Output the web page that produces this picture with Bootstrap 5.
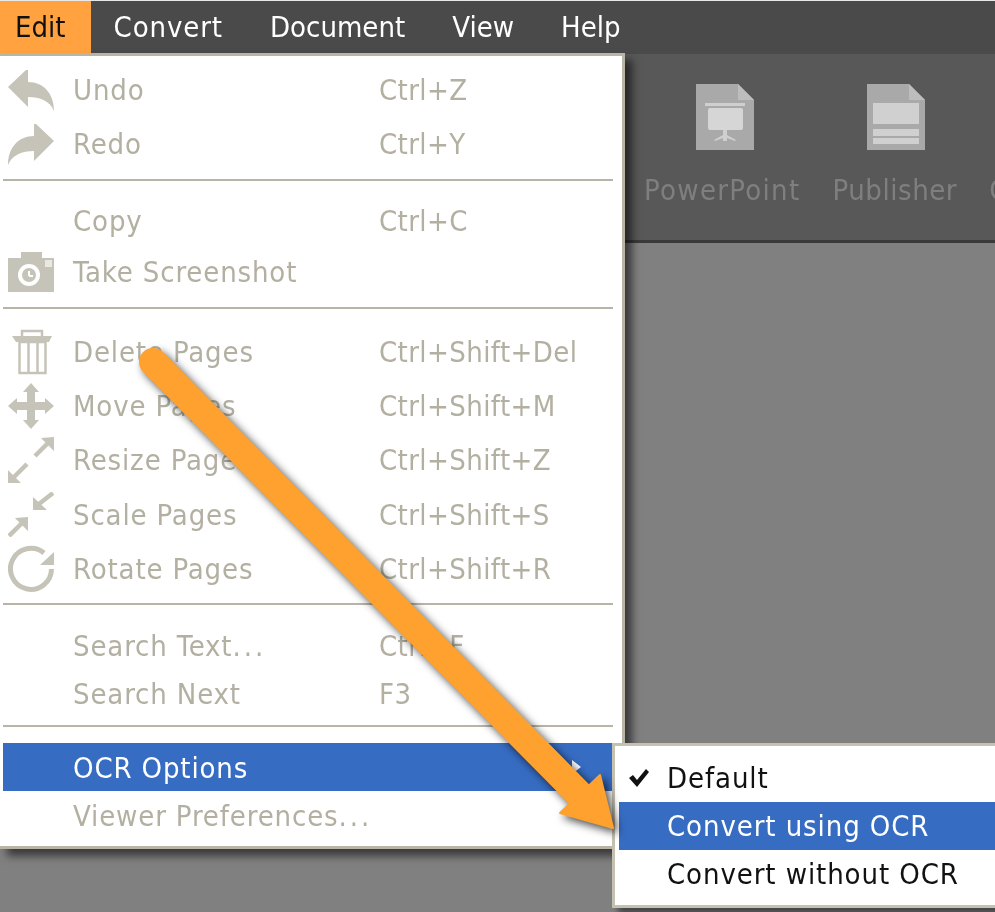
<!DOCTYPE html>
<html lang="en">
<head>
<meta charset="utf-8">
<title>Edit menu</title>
<link rel="stylesheet" href="https://cdn.jsdelivr.net/npm/bootstrap@5.3.0/dist/css/bootstrap.min.css">
<style>
html,body{margin:0;background:#808080}
body{font-family:"DejaVu Sans Condensed","DejaVu Sans","Noto Sans",sans-serif;font-stretch:condensed;font-size:29px;line-height:1}
.app-shell{width:995px;height:912px;overflow:hidden;position:relative;background:#808080;filter:blur(.35px)}
.app-bar{height:54px;background:#4a4a4a;padding:0;flex-wrap:nowrap;justify-content:flex-start;border-top:1px solid #e8e8e8}
.app-top{color:#fff;height:53px;display:flex;align-items:center;padding:0 23.5px;font-size:29px}
.app-top.active-top{background:#ffa23f;color:#111;padding:0 25px 0 15px}
.app-top.wide-word{padding-left:23px;letter-spacing:.9px}
.tool-strip{height:189px;background:#585858;border-bottom:3px solid #3a3a3a;padding:30px 0 0 644px;gap:32px;overflow:hidden}
.tool-item{color:#7f7f7f;flex:0 0 auto}
.tool-item svg{display:block;margin-bottom:26px}
.tool-item svg.pp-icon{margin-left:5px}
.tool-item svg.pub-icon{margin-left:2px}
.tool-item .pp-name{letter-spacing:1.3px}
.tool-item .pub-name{letter-spacing:.55px}
.edit-menu{position:absolute;display:block;top:53px;left:0;width:625px;background:#fff;border:3px solid #b8b5a7;border-left:0;border-radius:0;padding:7px 9px 7px 3px;margin:0;box-shadow:7px 7px 8px rgba(0,0,0,.55);min-width:0;font-size:29px}
.menu-row{display:flex;align-items:center;height:54px;padding:0;color:#b3b0a2;background:transparent;white-space:nowrap}
.menu-row.short-row{height:48px}
.menu-row.disabled{color:#b3b0a2}
.menu-row.nudged .label-slot,.menu-row.nudged .key-slot{padding-top:3px}
.icon-slot{width:70px;padding-left:5px;flex:0 0 auto;display:flex;align-items:center}
.label-slot{width:306px;flex:0 0 auto;letter-spacing:.85px}
.dot-run{letter-spacing:3px}
.key-slot{letter-spacing:.4px}
.menu-rule{height:2px;margin:8px 0 16px;background:#b8b5a7;border:0;opacity:1}
.menu-row.current-row{background:#366cc2;color:#fff;margin-right:-9px;position:relative}
.sub-caret{position:absolute;right:41px;top:17px;width:0;height:0;border-left:9px solid #fff;border-top:7px solid transparent;border-bottom:7px solid transparent}
.ocr-menu{position:absolute;display:block;top:743px;left:612px;width:420px;background:#fff;border:3px solid #c4c1b3;border-radius:0;padding:8px 0 7px 4px;margin:0;box-shadow:6px 6px 6px rgba(0,0,0,.45);min-width:0;font-size:29px}
.ocr-menu .menu-row{color:#111;height:48px;letter-spacing:.9px}
.ocr-menu .menu-row.current-row{color:#fff;margin-right:0}
.check-slot{width:48px;flex:0 0 auto;padding-left:9px;display:flex;align-items:center}
.guide-arrow{position:absolute;left:130px;top:340px;z-index:1100;filter:drop-shadow(4px 4px 4px rgba(0,0,0,.7))}
</style>
</head>
<body>
<div class="app-shell d-flex flex-column">
  <nav class="navbar app-bar">
    <span class="app-top active-top">Edit</span>
    <span class="app-top wide-word">Convert</span>
    <span class="app-top">Document</span>
    <span class="app-top">View</span>
    <span class="app-top">Help</span>
  </nav>
  <div class="tool-strip d-flex">
    <div class="tool-item d-flex flex-column align-items-center">
      <svg class="pp-icon" width="58" height="66" viewBox="0 0 58 66"><path d="M0 0H42L58 16V66H0Z" fill="#a9a9a9"/><path d="M42 0L58 16H42Z" fill="#bdbdbd"/><rect x="9" y="19" width="40" height="3" fill="#cfcfcf"/><rect x="12" y="24" width="35" height="22" rx="2" fill="#d6d6d6"/><path d="M27 46h4v5l9 5-1 1-8-3v3h-4v-3l-8 3-1-1 9-5z" fill="#cfcfcf"/></svg>
      <span class="pp-name">PowerPoint</span>
    </div>
    <div class="tool-item d-flex flex-column align-items-center">
      <svg class="pub-icon" width="58" height="66" viewBox="0 0 58 66"><path d="M0 0H42L58 16V66H0Z" fill="#a9a9a9"/><path d="M42 0L58 16H42Z" fill="#bdbdbd"/><rect x="6" y="19" width="46" height="21" fill="#d0d0d0"/><rect x="6" y="45" width="46" height="7" fill="#d0d0d0"/><rect x="6" y="54" width="46" height="6" fill="#d0d0d0"/></svg>
      <span class="pub-name">Publisher</span>
    </div>
    <div class="tool-item d-flex flex-column align-items-start">
      <svg width="5" height="66" viewBox="0 0 5 66"></svg>
      <span>C</span>
    </div>
  </div>
  <div class="flex-grow-1"></div>

  <div class="dropdown-menu edit-menu">
    <div class="menu-row disabled"><span class="icon-slot"><svg width="46" height="41" viewBox="0 0 46 41"><path d="M18 0L0 17L20 37V27C32 27 42 31 46 41C46 24 36 12 20 12V0Z" fill="#c6c4b8"/></svg></span><span class="label-slot">Undo</span><span class="key-slot">Ctrl+Z</span></div>
    <div class="menu-row disabled"><span class="icon-slot"><svg width="46" height="41" viewBox="0 0 46 41"><path d="M28 0L46 17L26 37V27C14 27 4 31 0 41C0 24 10 12 26 12V0Z" fill="#c6c4b8"/></svg></span><span class="label-slot">Redo</span><span class="key-slot">Ctrl+Y</span></div>
    <hr class="menu-rule">
    <div class="menu-row short-row disabled"><span class="icon-slot"></span><span class="label-slot">Copy</span><span class="key-slot">Ctrl+C</span></div>
    <div class="menu-row disabled"><span class="icon-slot"><svg width="46" height="40" viewBox="0 0 46 40"><path d="M0 6H13V0H34V6H46V40H0Z" fill="#c6c4b8"/><circle cx="21" cy="23" r="11" fill="#fff"/><circle cx="21" cy="23" r="7" fill="#c6c4b8"/><path d="M21 24V19M21 24H25" stroke="#fff" stroke-width="2"/><rect x="37" y="8" width="7" height="7" fill="#e9e8e2"/></svg></span><span class="label-slot">Take Screenshot</span></div>
    <hr class="menu-rule">
    <div class="menu-row disabled"><span class="icon-slot"><svg width="46" height="46" viewBox="0 0 46 46"><g fill="none" stroke="#c6c4b8" stroke-width="2.5"><rect x="14" y="2" width="20" height="7"/><rect x="11.5" y="13" width="26" height="31"/><path d="M20.5 13V44M29.5 13V44"/></g><path d="M4 7H44L41 13H8Z" fill="#c6c4b8"/></svg></span><span class="label-slot">Delete Pages</span><span class="key-slot">Ctrl+Shift+Del</span></div>
    <div class="menu-row disabled"><span class="icon-slot"><svg width="46" height="46" viewBox="0 0 46 46"><path d="M23 0L31 9H27V19H37V15L46 23L37 31V27H27V37H31L23 46L15 37H19V27H9V31L0 23L9 15V19H19V9H15Z" fill="#c6c4b8"/></svg></span><span class="label-slot">Move Pages</span><span class="key-slot">Ctrl+Shift+M</span></div>
    <div class="menu-row disabled"><span class="icon-slot"><svg width="46" height="46" viewBox="0 0 46 46"><path d="M33 1L46 0V14ZM0 46V33L13 46Z" fill="#c6c4b8"/><path d="M27 19L40 6M19 27L6 40" stroke="#c6c4b8" stroke-width="4.5"/></svg></span><span class="label-slot">Resize Pages</span><span class="key-slot">Ctrl+Shift+Z</span></div>
    <div class="menu-row nudged disabled"><span class="icon-slot"><svg width="46" height="45" viewBox="0 0 46 45"><path d="M25 18V5L39 18ZM20 25L7 26L20 39Z" fill="#c6c4b8"/><path d="M45 1L31 12M1 44L14 31" stroke="#c6c4b8" stroke-width="4.5"/></svg></span><span class="label-slot">Scale Pages</span><span class="key-slot">Ctrl+Shift+S</span></div>
    <div class="menu-row nudged disabled"><span class="icon-slot"><svg width="46" height="47" viewBox="0 0 46 47"><path d="M36 8A20.5 20.5 0 1 0 43.5 24" fill="none" stroke="#c6c4b8" stroke-width="5"/><path d="M46 7V20H32Z" fill="#c6c4b8"/></svg></span><span class="label-slot">Rotate Pages</span><span class="key-slot">Ctrl+Shift+R</span></div>
    <hr class="menu-rule">
    <div class="menu-row nudged short-row disabled"><span class="icon-slot"></span><span class="label-slot">Search Text<span class="dot-run">...</span></span><span class="key-slot">Ctrl+F</span></div>
    <div class="menu-row nudged short-row disabled"><span class="icon-slot"></span><span class="label-slot">Search Next</span><span class="key-slot">F3</span></div>
    <hr class="menu-rule">
    <div class="menu-row nudged short-row current-row"><span class="icon-slot"></span><span class="label-slot">OCR Options</span><span class="sub-caret"></span></div>
    <div class="menu-row nudged short-row disabled"><span class="icon-slot"></span><span class="label-slot">Viewer Preferences<span class="dot-run">...</span></span></div>
  </div>

  <div class="dropdown-menu ocr-menu">
    <div class="menu-row"><span class="check-slot"><svg width="22" height="20" viewBox="0 0 22 20"><path d="M1 10L5 7L9 12L18 1L21 4L9 19Z" fill="#111"/></svg></span><span>Default</span></div>
    <div class="menu-row current-row"><span class="check-slot"></span><span>Convert using OCR</span></div>
    <div class="menu-row"><span class="check-slot"></span><span>Convert without OCR</span></div>
  </div>

  <svg class="guide-arrow" width="500" height="500" viewBox="130 340 500 500"><path d="M153 362L582 797" fill="none" stroke="#fea12e" stroke-width="28" stroke-linecap="round"/><path d="M600 775L613 828L560 813Z" fill="#fea12e" stroke="#fea12e" stroke-width="2" stroke-linejoin="round"/></svg>
</div>
</body>
</html>
